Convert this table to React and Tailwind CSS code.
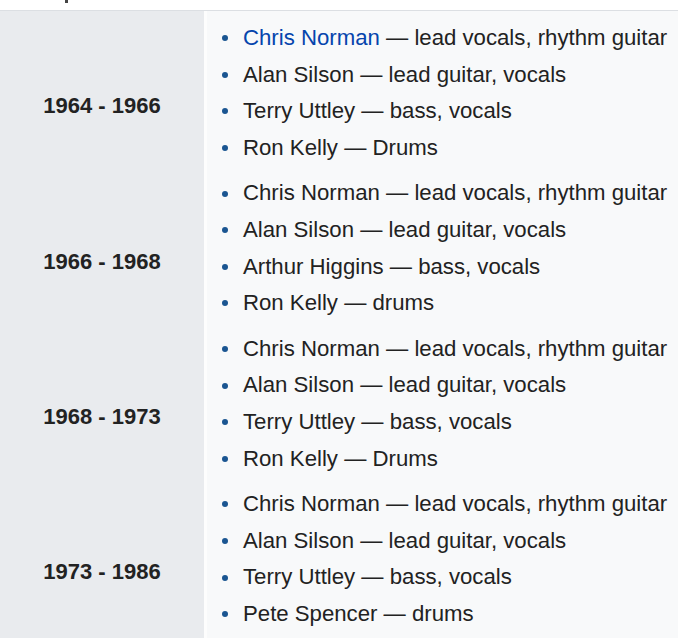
import React from 'react';

const eras = [
  {
    years: '1964 - 1966',
    members: [
      { name: 'Chris Norman', role: 'lead vocals, rhythm guitar', link: true },
      { name: 'Alan Silson', role: 'lead guitar, vocals' },
      { name: 'Terry Uttley', role: 'bass, vocals' },
      { name: 'Ron Kelly', role: 'Drums' },
    ],
  },
  {
    years: '1966 - 1968',
    members: [
      { name: 'Chris Norman', role: 'lead vocals, rhythm guitar' },
      { name: 'Alan Silson', role: 'lead guitar, vocals' },
      { name: 'Arthur Higgins', role: 'bass, vocals' },
      { name: 'Ron Kelly', role: 'drums' },
    ],
  },
  {
    years: '1968 - 1973',
    members: [
      { name: 'Chris Norman', role: 'lead vocals, rhythm guitar' },
      { name: 'Alan Silson', role: 'lead guitar, vocals' },
      { name: 'Terry Uttley', role: 'bass, vocals' },
      { name: 'Ron Kelly', role: 'Drums' },
    ],
  },
  {
    years: '1973 - 1986',
    members: [
      { name: 'Chris Norman', role: 'lead vocals, rhythm guitar' },
      { name: 'Alan Silson', role: 'lead guitar, vocals' },
      { name: 'Terry Uttley', role: 'bass, vocals' },
      { name: 'Pete Spencer', role: 'drums' },
    ],
  },
];

const App = () => {
  return (
    <div className="w-[678px] h-[638px] overflow-hidden bg-white flex flex-col font-['Liberation_Sans',Arial,sans-serif] text-[#222]">
      {/* cut-off heading above */}
      <div className="h-[10px] shrink-0 pl-[65px]">
        <span className="block w-[3px] h-[3px] bg-[#444]"></span>
      </div>

      {/* Members table */}
      <div className="flex-1 flex flex-col border-t border-[#dcdfe3]">
        {eras.map((era) => (
          <div key={era.years} className="flex">
            <div className="w-[204px] shrink-0 bg-[#e9ebee] flex items-center justify-center pt-[34px] text-[22px] font-bold">
              {era.years}
            </div>
            <ul className="flex-1 bg-[#f8f9fa] border-l-[3px] border-[#fdfdfd] pt-[9px] pl-[15px] text-[22.2px] leading-[36.6px]">
              {era.members.map((m) => (
                <li key={m.name} className="flex items-center gap-[15px] whitespace-nowrap">
                  <span className="w-[6px] h-[6px] rounded-full bg-[#1a5591] shrink-0"></span>
                  <span>
                    <span className={m.link ? 'text-[#0645ad]' : ''}>{m.name}</span> — {m.role}
                  </span>
                </li>
              ))}
            </ul>
          </div>
        ))}
        <div className="flex-1 flex">
          <div className="w-[204px] shrink-0 bg-[#e9ebee]"></div>
          <div className="flex-1 bg-[#f8f9fa] border-l-[3px] border-[#fdfdfd]"></div>
        </div>
      </div>
    </div>
  );
};

export default App;
